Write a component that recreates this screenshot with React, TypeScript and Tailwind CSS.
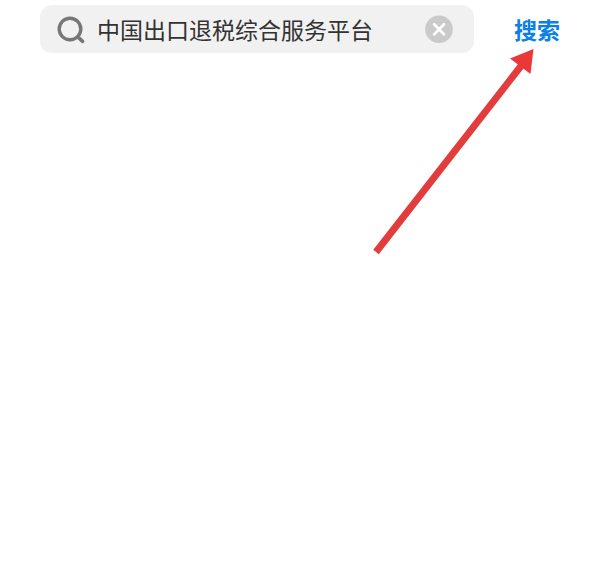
import { useState } from "react"

function SearchIcon() {
  return (
    <svg viewBox="0 0 28 28" className="w-7 h-7 shrink-0 overflow-visible" fill="none" stroke="#777" strokeWidth="3.4" strokeLinecap="round" aria-hidden="true">
      <circle cx="14" cy="14" r="10.8" />
      <path d="M22 22.2l4.6 4.2" strokeWidth="3.6" />
    </svg>
  )
}

function ClearIcon() {
  return (
    <svg viewBox="0 0 28 28" className="w-7 h-7" aria-hidden="true">
      <circle cx="14" cy="14.2" r="13.8" fill="#cacaca" />
      <path d="M9.2 9.2l9.8 10.2M19 9.2L9.2 19.4" stroke="#fff" strokeWidth="2.7" strokeLinecap="round" />
    </svg>
  )
}

export default function App() {
  const [query, setQuery] = useState("中国出口退税综合服务平台")

  return (
    <main className="relative min-h-screen bg-white font-['Liberation_Sans','Noto_Sans_CJK_SC',sans-serif]">
      {/* Search bar */}
      <form className="flex items-center px-10 pt-[5px]" onSubmit={(e) => e.preventDefault()}>
        <div className="flex flex-1 min-w-0 items-center gap-[13px] h-12 pl-4 pr-[21px] rounded-xl bg-[#f1f1f1]">
          <SearchIcon />
          <input
            type="text"
            aria-label="搜索"
            value={query}
            onChange={(e) => setQuery(e.target.value)}
            className="flex-1 min-w-0 pt-1 bg-transparent text-[23px] leading-8 text-[#333] outline-none"
          />
          <button type="button" aria-label="清除" onClick={() => setQuery("")} className="shrink-0">
            <ClearIcon />
          </button>
        </div>
        <button type="submit" className="ml-10 pt-1 shrink-0 text-[23px] leading-8 font-bold text-[#0b80e6]">
          搜索
        </button>
      </form>

      {/* Arrow pointing at the search button */}
      <svg viewBox="0 0 164 210" className="absolute top-12 right-16 w-[164px] h-[210px] pointer-events-none" fill="#ea3838" aria-hidden="true">
        <path d="M4 204L149 18" stroke="#e23c3c" strokeWidth="7" />
        <path d="M161.5 1L138 10.5L158.5 26Z" />
      </svg>
    </main>
  )
}
